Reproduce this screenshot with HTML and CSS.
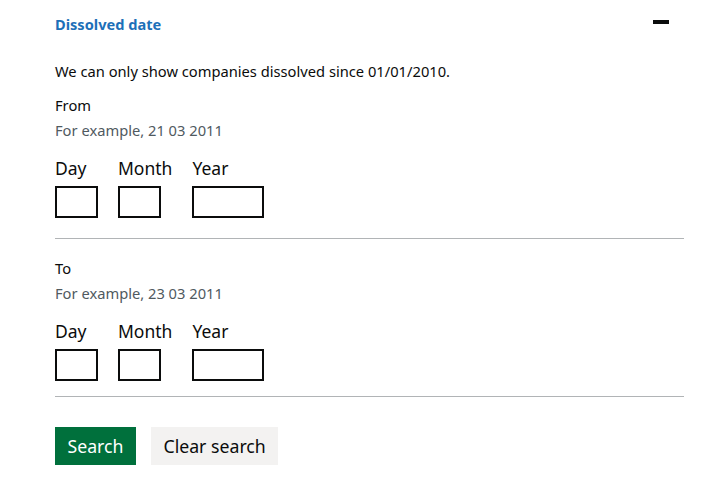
FILE: index.html
```html
<!DOCTYPE html>
<html lang="en">
<head>
<meta charset="utf-8">
<title>Dissolved date</title>
<link rel="stylesheet" href="styles.css">
</head>
<body>
<div class="page">
  <div class="section-head">
    <h2 class="section-title">Dissolved date</h2>
    <span class="collapse-icon" aria-hidden="true"></span>
  </div>
  <p class="intro">We can only show companies dissolved since 01/01/2010.</p>

  <div class="fieldset">
    <div class="legend">From</div>
    <div class="hint">For example, 21 03 2011</div>
    <div class="date-row">
      <div class="date-item">
        <label class="date-label">Day</label>
        <input class="date-input w2" type="text">
      </div>
      <div class="date-item">
        <label class="date-label">Month</label>
        <input class="date-input w2" type="text">
      </div>
      <div class="date-item">
        <label class="date-label">Year</label>
        <input class="date-input w4" type="text">
      </div>
    </div>
  </div>

  <div class="fieldset divided second">
    <div class="legend">To</div>
    <div class="hint">For example, 23 03 2011</div>
    <div class="date-row">
      <div class="date-item">
        <label class="date-label">Day</label>
        <input class="date-input w2" type="text">
      </div>
      <div class="date-item">
        <label class="date-label">Month</label>
        <input class="date-input w2" type="text">
      </div>
      <div class="date-item">
        <label class="date-label">Year</label>
        <input class="date-input w4" type="text">
      </div>
    </div>
  </div>

  <div class="actions">
    <button class="btn btn-primary" type="button">Search</button>
    <button class="btn btn-secondary" type="button">Clear search</button>
  </div>
</div>
</body>
</html>
```

FILE: styles.css
```css
* { box-sizing: border-box; }
html, body { margin: 0; padding: 0; background: #ffffff; }
body {
  font-family: "Noto Sans", "Open Sans", Arial, sans-serif;
  color: #0b0c0c;
}
.page {
  width: 684px;
  padding-left: 55px;
  padding-top: 14px;
}
.section-head {
  display: flex;
  justify-content: space-between;
  align-items: flex-start;
  height: 20px;
}
.section-title {
  margin: 0;
  font-size: 14.6px;
  line-height: 20px;
  font-weight: 700;
  color: #1d70b8;
}
.collapse-icon {
  display: block;
  width: 16px;
  height: 4px;
  background: #0b0c0c;
  margin-top: 6px;
  margin-right: 15px;
}
.intro {
  margin: 27px 0 0;
  font-size: 14.7px;
  line-height: 20px;
}
.fieldset { margin-top: 14px; padding-bottom: 20px; }
.legend { font-size: 14.7px; line-height: 20px; }
.hint {
  margin-top: 5px;
  font-size: 14.7px;
  line-height: 20px;
  color: #505a5f;
}
.date-row {
  display: flex;
  gap: 20px;
  margin-top: 17px;
}
.date-item { display: flex; flex-direction: column; }
.date-label {
  font-size: 17.5px;
  line-height: 22px;
  margin-bottom: 7px;
}
.date-input {
  height: 32px;
  border: 2px solid #0b0c0c;
  border-radius: 0;
  background: #fff;
  padding: 0 4px;
  font: inherit;
  margin: 0;
}
.date-input.w2 { width: 43px; }
.date-input.w4 { width: 72px; }
.divided {
  border-top: 1px solid #b1b4b6;
  margin-top: 0;
  padding-top: 19px;
  padding-bottom: 15px;
}
.actions {
  border-top: 1px solid #b1b4b6;
  padding-top: 30px;
  display: flex;
  gap: 15px;
}
.btn {
  font-family: inherit;
  font-size: 17.7px;
  line-height: 22px;
  border: 0;
  border-radius: 0;
  padding: 8px 12.5px 8px;
  height: 38px;
  margin: 0;
  cursor: pointer;
}
.btn-primary {
  background: #00703c;
  color: #ffffff;
  box-shadow: 0 2px 0 #002d18;
}
.btn-secondary {
  background: #f3f2f1;
  color: #0b0c0c;
  box-shadow: 0 2px 0 #929191;
}
```
